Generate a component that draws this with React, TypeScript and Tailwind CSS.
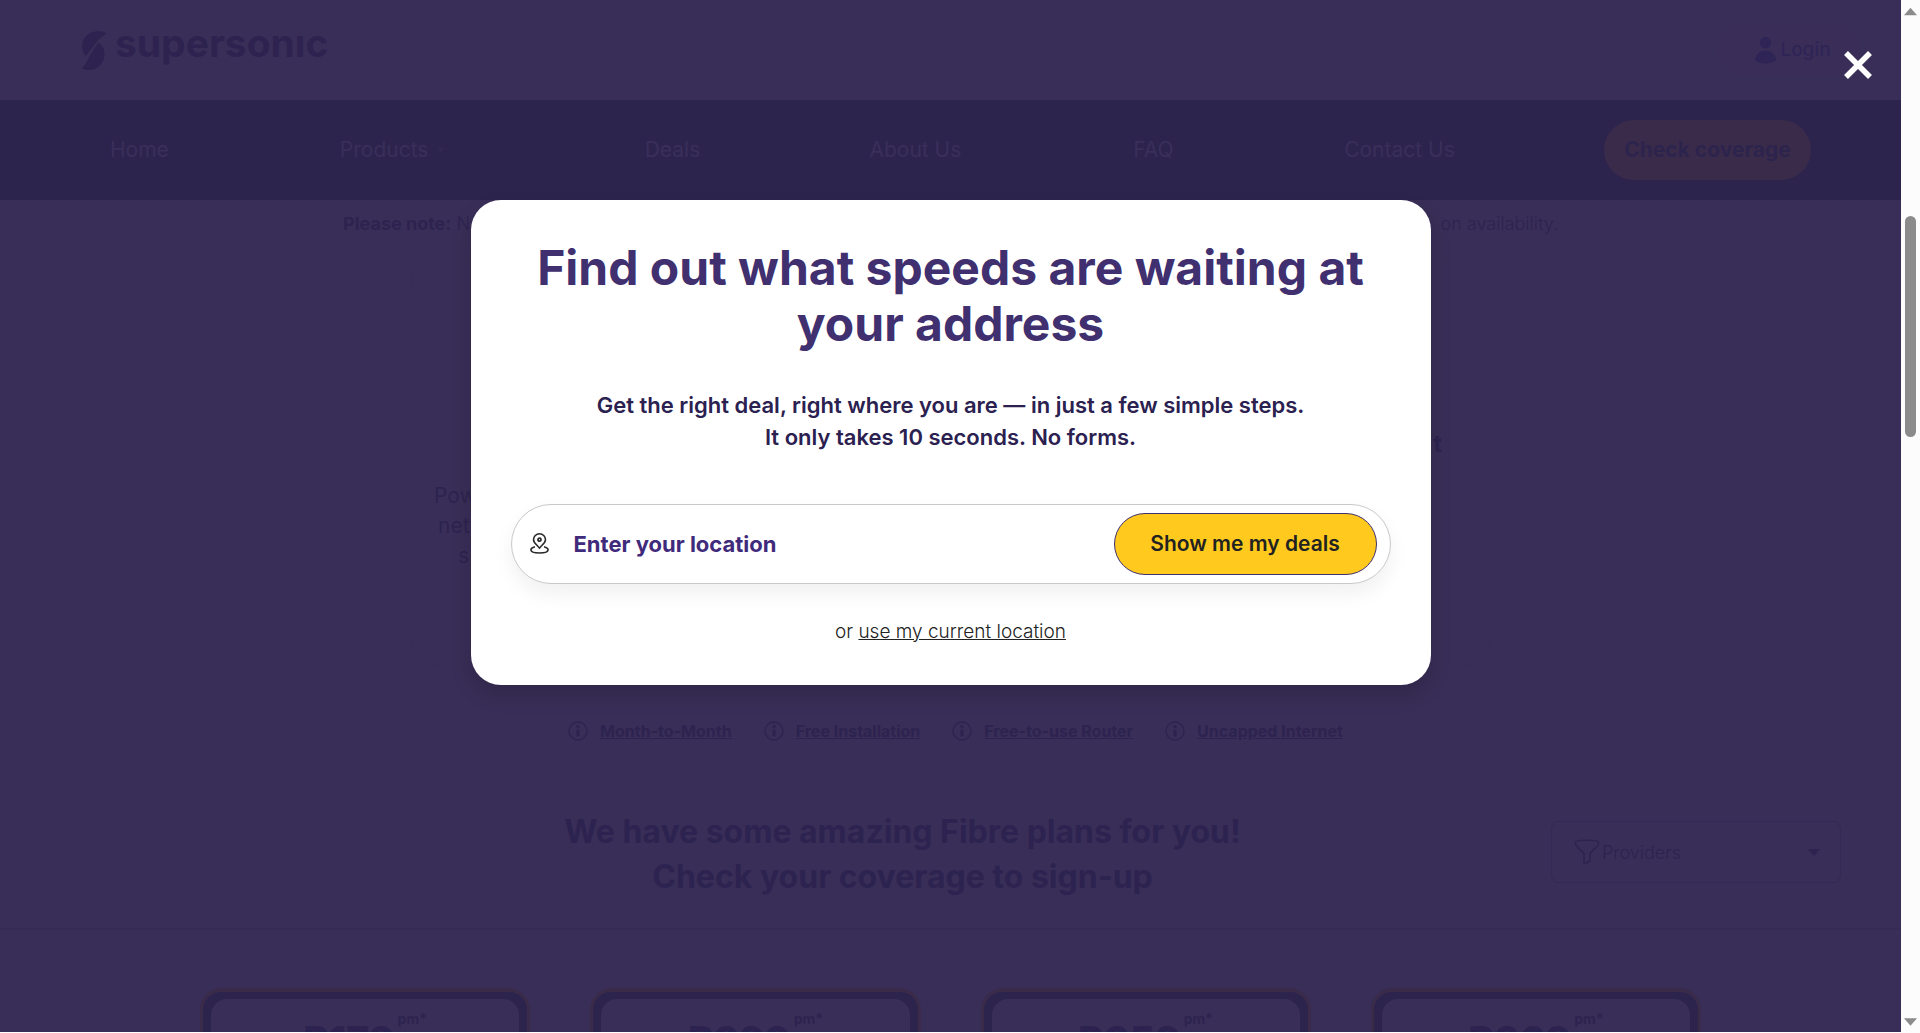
const navItems = [
  { label: 'Home', width: 'w-[101px]' },
  { label: 'Products', width: 'w-[176px]', caret: true },
  { label: 'Deals', width: 'w-[96px]' },
  { label: 'About Us', width: 'w-[135px]' },
  { label: 'FAQ', width: 'w-[82px]' },
  { label: 'Contact Us', width: 'w-[151px]' },
];

const features = ['Month-to-Month', 'Free Installation', 'Free-to-use Router', 'Uncapped Internet'];
const prices = ['R179', 'R399', 'R359', 'R369'];

function LogoMark() {
  return (
    <svg width="25" height="39" viewBox="0 0 25 39" fill="currentColor" aria-hidden="true">
      <path d="M24.500 2.500C21 0 17-.3 13 .5C5 2 0 8 0 15c0 4.500 1.500 8 4 10L15 10.500C18 7 20 6 24.500 2.500Z" />
      <path d="M16.500 11.500C20.500 14 22.500 18 22.500 23C22.500 32 16 39 7 39C4.500 39 2 38.500 0 37.500C4 33 6 28 9 22.500Z" />
    </svg>
  );
}

function UserIcon() {
  return (
    <svg width="21" height="27" viewBox="0 0 21 27" fill="currentColor" aria-hidden="true">
      <circle cx="10.500" cy="5.700" r="5.700" />
      <path d="M0 23.500C0 18 4 13.500 10.500 13.500S21 18 21 23.500C18 25.500 14.500 26.500 10.500 26.500S3 25.500 0 23.500Z" />
    </svg>
  );
}

function InfoIcon() {
  return (
    <svg width="20" height="20" viewBox="0 0 20 20" fill="none" stroke="currentColor" aria-hidden="true">
      <circle cx="10" cy="10" r="9" strokeWidth="1.300" />
      <circle cx="10" cy="5.600" r="1.700" fill="currentColor" stroke="none" />
      <rect x="8.400" y="8.500" width="3.200" height="7" rx="1.600" fill="currentColor" stroke="none" />
    </svg>
  );
}

function FilterIcon() {
  return (
    <svg width="26" height="26" viewBox="0 0 26 26" fill="none" stroke="currentColor" strokeWidth="1.600" strokeLinejoin="round" aria-hidden="true">
      <path d="M1.500 3C1.500 1.800 6 1.200 13 1.200S24.500 1.800 24.500 3v2C24.500 7 17 12.500 16 14.500V20.500C16 22.500 12.500 24 10 24.500V14.500C9 12.500 1.500 7 1.500 5Z" />
    </svg>
  );
}

function PinIcon() {
  return (
    <svg width="19" height="21" viewBox="0 0 19 21" fill="none" stroke="#2a2a2a" strokeWidth="1.600" strokeLinecap="round" strokeLinejoin="round" className="-mt-px shrink-0" aria-hidden="true">
      <path d="M9.500 15.200C7.500 12 3.500 10 3.500 6.700a6 5.900 0 0 1 12 0C15.500 10 11.500 12 9.500 15.200Z" />
      <circle cx="9.500" cy="6.700" r="1.500" strokeWidth="1.800" />
      <path d="M4.300 13.900C2.200 14.500.9 15.400.9 16.700c0 2 3.800 3.300 8.600 3.300s8.600-1.300 8.600-3.300c0-1.300-1.300-2.200-3.400-2.800" />
    </svg>
  );
}

function Caret({ className }: { className: string }) {
  return (
    <svg viewBox="0 0 12 7" fill="currentColor" className={className} aria-hidden="true">
      <path d="M0 0h12L6 7Z" />
    </svg>
  );
}

function Header() {
  return (
    <header>
      <div className="flex h-[100px] items-center justify-between pr-10 pl-[82px]">
        <a href="#" className="flex items-center gap-2 text-[#2e2350]">
          <LogoMark />
          <span className="-mt-4 text-[39px] leading-none font-bold">supersonıc</span>
        </a>
        <a href="#" className="flex h-[52px] w-36 items-center justify-center gap-1 rounded-full bg-[#3a2e58] pl-2 text-[19px] font-medium text-[#2f2456]">
          <UserIcon />
          Login
        </a>
      </div>
      <nav className="flex h-[100px] items-center justify-between bg-[#2d244e] px-[90px] text-[21px]">
        {navItems.map((item) => (
          <a
            key={item.label}
            href="#"
            className={`flex items-center gap-2 px-5 whitespace-nowrap text-[#392f5a] ${item.width}`}
          >
            {item.label}
            {item.caret && <Caret className="h-[6px] w-[9px] text-[#31274f]" />}
          </a>
        ))}
        <button className="h-[60px] w-[207px] rounded-[30px] bg-[#3a2b4a] font-bold whitespace-nowrap text-[#2d244e]">
          Check coverage
        </button>
      </nav>
    </header>
  );
}

function PageBackdrop() {
  return (
    <div className="h-full overflow-hidden bg-[#392e57] text-[#2d2350]" aria-hidden="true">
      <Header />
      <main>
        <p className="mx-auto flex max-w-[1215px] justify-between pt-[10px] text-[18px] leading-[27px] font-light">
          <span>
            <b className="font-bold">Please note:</b> N
          </span>
          <span>on availability.</span>
        </p>
        <section className="mx-auto mt-5 h-[410px] max-w-[1081px] rounded-[30px] border border-[#382d55] pt-[170px] text-[21px] leading-[30px]">
          <h3 className="pr-12 text-right text-2xl leading-8 font-bold">t</h3>
          <p className="pt-[21px] pl-[23px]">
            Pow
            <span className="block pl-1">net</span>
            <span className="block pl-6">s</span>
          </p>
        </section>
        <ul className="mt-[52px] flex justify-center gap-8 pl-[10px] text-[16px] leading-6 font-bold">
          {features.map((feature) => (
            <li key={feature} className="flex items-center gap-3">
              <InfoIcon />
              <a href="#" className="underline">
                {feature}
              </a>
            </li>
          ))}
        </ul>
        <section className="mt-[66px] flex items-start border-b-2 border-[#362b54] pr-[60px] pb-[29px] pl-[254px]">
          <h2 className="flex-1 text-center text-[32px] leading-[45px] font-bold">
            We have some amazing Fibre plans for you!
            <br />
            Check your coverage to sign-up
          </h2>
          <label className="mt-3 flex h-[62px] w-[290px] items-center rounded-lg border border-[#342954] pr-5 pl-[22px]">
            <FilterIcon />
            <select aria-label="Providers" className="ml-[2px] flex-1 appearance-none bg-transparent text-[18px] font-light">
              <option>Providers</option>
            </select>
            <Caret className="h-[7px] w-3" />
          </label>
        </section>
        <section className="mx-auto mt-[58px] grid max-w-[1501px] grid-cols-4 gap-[60px]">
          {prices.map((price) => (
            <article key={price} className="rounded-[22px] bg-[#3a2b4a] px-[3px] pt-1">
              <div className="rounded-[18px] bg-[#2d244e] px-2 pt-[7px]">
                <div className="flex h-40 justify-center gap-[3px] rounded-t-2xl bg-[#392e57] pt-3">
                  <span className="pt-[10px] text-[39px] leading-[40px] font-extrabold">{price}</span>
                  <span className="text-[14px] leading-4 font-bold">pm*</span>
                </div>
              </div>
            </article>
          ))}
        </section>
      </main>
    </div>
  );
}

function LocationDialog() {
  return (
    <div role="dialog" aria-labelledby="dialog-title" className="w-full max-w-[960px] rounded-[30px] bg-white px-10 pt-10 pb-[39px] text-center shadow-[0_10px_20px_rgba(0,0,0,0.15)]">
      <h1 id="dialog-title" className="text-[48px] leading-[56px] font-bold text-[#403070]">
        Find out what speeds are waiting at your address
      </h1>
      <p className="mt-[37px] text-[22px] leading-8 font-semibold text-[#2b2150]">
        Get the right deal, right where you are — in just a few simple steps.
        <br />
        It only takes 10 seconds. No forms.
      </p>
      <form className="mt-[51px] flex h-20 items-center rounded-full border border-[#c8c8c8] pr-[13px] pl-[18px] shadow-[0_10px_20px_rgba(0,0,0,0.06)]">
        <PinIcon />
        <input
          type="text"
          aria-label="Enter your location"
          placeholder="Enter your location"
          className="ml-[25px] min-w-0 flex-1 text-[22px] font-bold outline-none placeholder:text-[#3f2a7c] placeholder:opacity-100"
        />
        <button type="button" className="h-[62px] w-[263px] rounded-full border border-[#3f2f74] bg-[#ffca1d] text-[21px] font-semibold text-[#222]">
          Show me my deals
        </button>
      </form>
      <p className="mt-[34px] text-[19px] leading-7 font-light text-[#222]">
        or{' '}
        <a href="#" className="underline">
          use my current location
        </a>
      </p>
    </div>
  );
}

function Scrollbar() {
  return (
    <div className="flex w-[19px] shrink-0 flex-col items-center bg-[#fcfcfc] py-[6px] text-[#8b8b8b]" aria-hidden="true">
      <Caret className="h-[11px] w-[13px] rotate-180" />
      <div className="mt-[199px] h-[221px] w-[11px] rounded-full bg-[#8b8b8b]" />
      <Caret className="mt-auto h-[10px] w-[13px]" />
    </div>
  );
}

export default function App() {
  return (
    <div className="flex h-screen bg-white font-['Inter',sans-serif]">
      <div className="relative min-w-0 flex-1 pb-px">
        <PageBackdrop />
        <div className="absolute inset-0 flex items-start justify-center pt-[200px]">
          <LocationDialog />
          <button aria-label="Close" className="absolute top-[51px] right-[29px] text-white">
            <svg width="28" height="28" viewBox="0 0 28 28" fill="none" stroke="currentColor" strokeWidth="5.500">
              <path d="M2 2 26 26M26 2 2 26" />
            </svg>
          </button>
        </div>
      </div>
      <Scrollbar />
    </div>
  );
}
